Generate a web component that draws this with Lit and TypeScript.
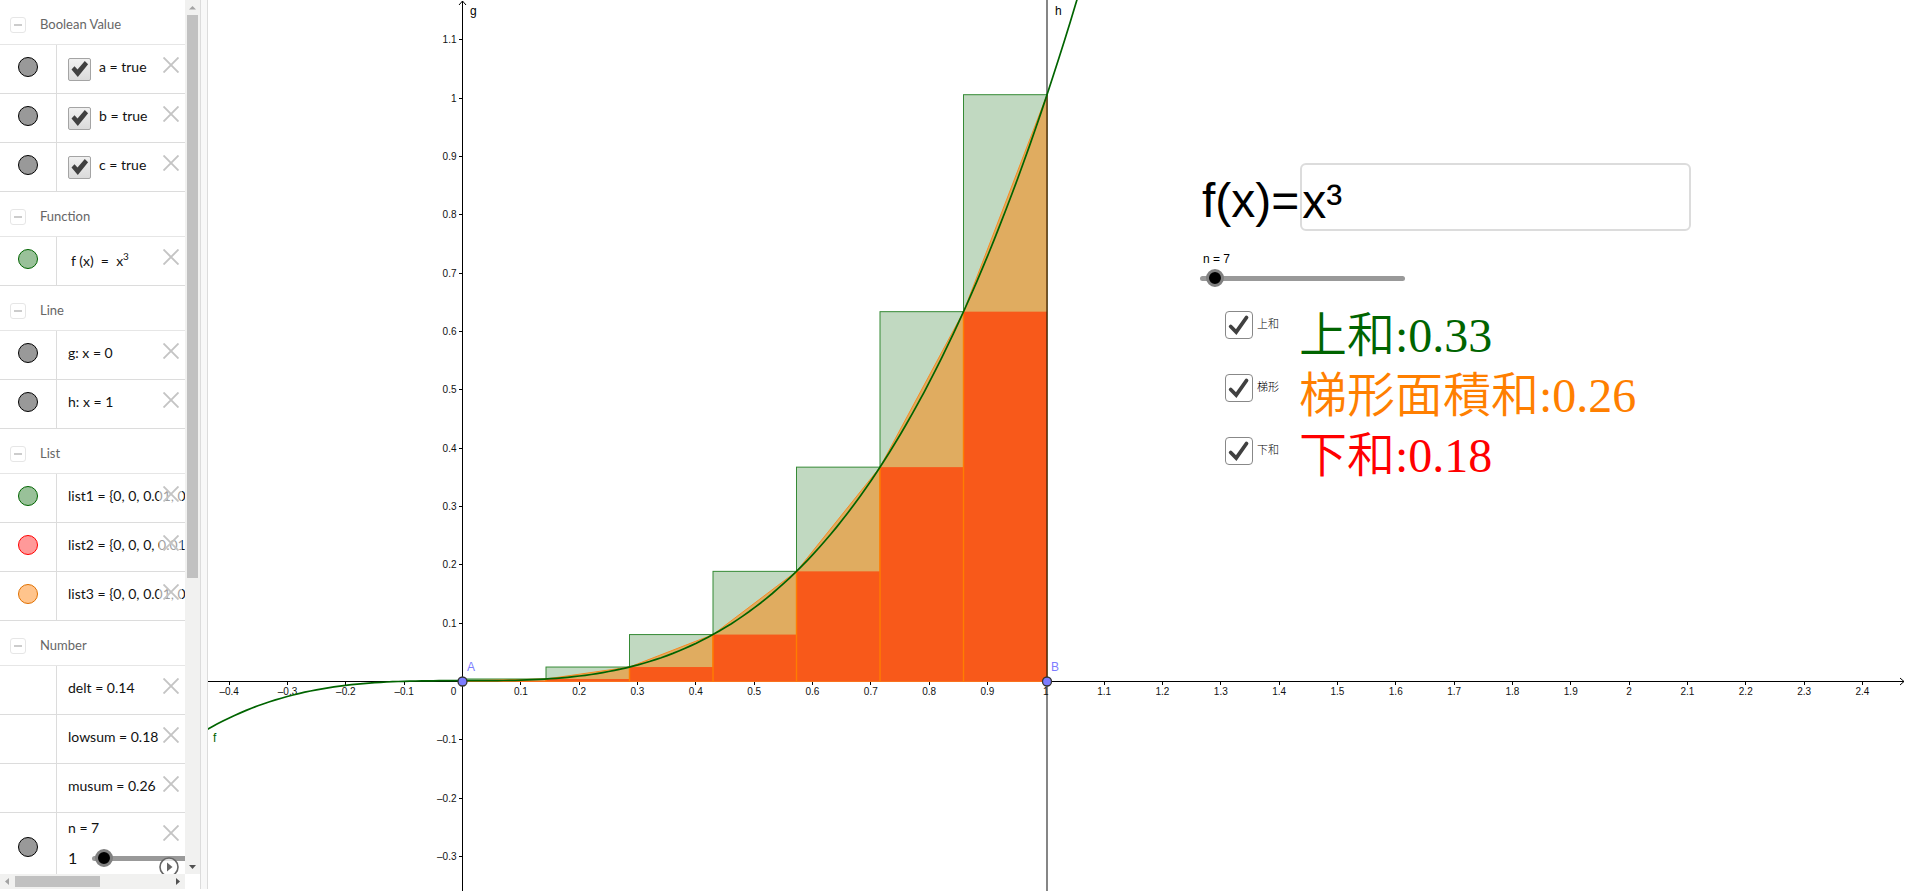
import { LitElement, html, svg, css, nothing } from "lit";
import { customElement } from "lit/decorators.js";

type Marble = "black" | "green" | "red" | "orange" | "none";
interface Item {
  kind: "bool" | "text" | "fn" | "slider";
  marble: Marble;
  text: string;
}
interface Group {
  title: string;
  items: Item[];
}

const GROUPS: Group[] = [
  {
    title: "Boolean Value",
    items: [
      { kind: "bool", marble: "black", text: "a = true" },
      { kind: "bool", marble: "black", text: "b = true" },
      { kind: "bool", marble: "black", text: "c = true" },
    ],
  },
  { title: "Function", items: [{ kind: "fn", marble: "green", text: "" }] },
  {
    title: "Line",
    items: [
      { kind: "text", marble: "black", text: "g: x = 0" },
      { kind: "text", marble: "black", text: "h: x = 1" },
    ],
  },
  {
    title: "List",
    items: [
      { kind: "text", marble: "green", text: "list1 = {0, 0, 0.01, 0.03, 0.05}" },
      { kind: "text", marble: "red", text: "list2 = {0, 0, 0, 0.01, 0.03}" },
      { kind: "text", marble: "orange", text: "list3 = {0, 0, 0.01, 0.02, 0.04}" },
    ],
  },
  {
    title: "Number",
    items: [
      { kind: "text", marble: "none", text: "delt = 0.14" },
      { kind: "text", marble: "none", text: "lowsum = 0.18" },
      { kind: "text", marble: "none", text: "musum = 0.26" },
      { kind: "slider", marble: "black", text: "n = 7" },
    ],
  },
];

const sliderStyles = css`
  .range {
    -webkit-appearance: none;
    appearance: none;
    display: block;
    height: 18px;
    margin: 0;
    background: transparent;
  }
  .range::-webkit-slider-runnable-track {
    height: 5px;
    background: #999;
    border-radius: 3px;
  }
  .range::-webkit-slider-thumb {
    -webkit-appearance: none;
    width: 18px;
    height: 18px;
    margin-top: -7px;
    border-radius: 50%;
    border: 3px solid #808080;
    background: #000;
  }
  .tick {
    display: grid;
  }
  .tick > * {
    grid-area: 1 / 1;
  }
  .tick > svg {
    pointer-events: none;
  }
`;

@customElement("algebra-view")
class AlgebraView extends LitElement {
  static styles = [
    sliderStyles,
    css`
      :host {
        display: grid;
        grid-template: minmax(0, 1fr) 15px / minmax(0, 1fr) 15px;
        font-family: Lato, "Noto Sans", sans-serif;
        background: #fff;
      }
      button {
        padding: 0;
        border: 0;
        background: none;
      }
      .list {
        overflow: hidden;
      }
      .head {
        display: flex;
        align-items: center;
        gap: 14px;
        height: 45px;
        box-sizing: border-box;
        padding: 3px 10px 0;
        border-bottom: 1px solid #e6e6e6;
        margin: 0;
        font-size: 13px;
        font-weight: 400;
        line-height: 16px;
        color: #666;
      }
      .fold {
        display: grid;
        place-items: center;
        width: 16px;
        height: 16px;
        margin-top: 3px;
        border: 1px solid #e6e6e6;
        border-radius: 3px;
      }
      .fold::before {
        content: "";
        width: 8px;
        height: 2px;
        background: #ccc;
      }
      .row {
        display: grid;
        grid-template-columns: 56px minmax(0, 1fr);
        height: 49px;
        box-sizing: border-box;
        border-bottom: 1px solid #dcdcdc;
      }
      .row.tall {
        height: 69px;
      }
      .side {
        display: grid;
        place-items: center;
        padding-bottom: 4px;
      }
      .tall .side {
        padding-bottom: 0;
      }
      .marble {
        width: 20px;
        height: 20px;
        border: 1px solid #000;
        border-radius: 50%;
        background: #999;
      }
      .marble.green {
        border-color: #006400;
        background: #99c199;
      }
      .marble.red {
        border-color: #f00;
        background: #ff9999;
      }
      .marble.orange {
        border-color: #e07000;
        background: #ffc48c;
      }
      .body {
        display: grid;
        grid-template-columns: minmax(0, 1fr) 23px;
        border-left: 1px solid #dcdcdc;
        padding-right: 3px;
        overflow: hidden;
      }
      .content {
        display: flex;
        gap: 8px;
        padding-left: 11px;
        padding-top: 12px;
        font-size: 14px;
        line-height: 20px;
        color: #111;
        white-space: nowrap;
      }
      .fn {
        padding-left: 14px;
        padding-top: 14px;
      }
      .content sup {
        font-size: 10px;
        line-height: 1px;
      }
      .check {
        appearance: none;
        box-sizing: border-box;
        width: 23px;
        height: 23px;
        margin: 1px 0 0;
        border: 1px solid #a4a4a4;
        border-radius: 2px;
        background: linear-gradient(#f0f0f0, #dadada);
      }
      .tick > svg {
        margin-top: 1px;
      }
      .close {
        width: 23px;
        height: 23px;
        margin-top: 8px;
        display: grid;
        place-items: center;
        background: rgba(255, 255, 255, 0.6);
        z-index: 1;
      }
      .slider {
        flex-direction: column;
        gap: 10px;
        padding-top: 5px;
      }
      .slider-line {
        display: flex;
        align-items: center;
        gap: 15px;
        font-size: 16px;
      }
      .slider-line .range {
        width: 120px;
        flex: none;
      }
      .tools {
        display: flex;
        flex-direction: column;
        gap: 13px;
      }
      .play {
        display: block;
        width: 20px;
        height: 20px;
        z-index: 1;
      }
      .bar {
        display: flex;
        justify-content: space-between;
        align-items: center;
        background: #f1f1f0;
      }
      .bar.v {
        flex-direction: column;
      }
      .bar svg {
        display: block;
        flex: none;
      }
      .rest {
        flex: 1;
        display: flex;
      }
      .v .rest {
        flex-direction: column;
      }
      .thumb {
        background: #c1c1c1;
      }
      .v .thumb {
        width: 11px;
        height: calc(200% / 3);
      }
      .h .thumb {
        height: 11px;
        width: 55%;
      }
    `,
  ];

  private item(it: Item) {
    const close = html`<button class="close" aria-label="Delete">
      <svg width="16" height="16" viewBox="0 0 16 16">
        <path d="M.5.5l15 15M15.500.5L.5 15.500" stroke="#c4c4c4" stroke-width="1.900" fill="none" />
      </svg>
    </button>`;
    let content;
    if (it.kind === "bool") {
      content = html`<label class="content">
        <span class="tick">
          <input class="check" type="checkbox" checked />
          <svg width="23" height="23" viewBox="0 0 23 23">
            <path d="M3.5 11.5l3-3.2 3 3.3L16.8 3l3.3 3.2L9.8 19z" fill="#404040" />
          </svg>
        </span>
        <span>${it.text}</span>
      </label>`;
    } else if (it.kind === "fn") {
      content = html`<div class="content fn"><span>f (x) &nbsp;=&nbsp; x<sup>3</sup></span></div>`;
    } else if (it.kind === "slider") {
      content = html`<div class="content slider">
        <span>${it.text}</span>
        <label class="slider-line">1<input class="range" type="range" min="1" max="200" value="7" aria-label="n" /></label>
      </div>`;
    } else {
      content = html`<div class="content"><span>${it.text}</span></div>`;
    }
    return html`<div class="row ${it.kind === "slider" ? "tall" : ""}">
      <div class="side">
        ${it.marble === "none" ? nothing : html`<button class="marble ${it.marble}" aria-label="Show or hide"></button>`}
      </div>
      <div class="body">
        ${content}
        <div class="tools">
          ${close}
          ${it.kind === "slider"
            ? html`<button class="play" aria-label="Play">
                <svg width="20" height="20" viewBox="0 0 20 20">
                  <circle cx="10" cy="10" r="9" fill="#fff" fill-opacity=".7" stroke="#666" stroke-width="1.6" />
                  <path d="M8 5.5l5.5 4.5L8 14.5z" fill="#666" />
                </svg>
              </button>`
            : nothing}
        </div>
      </div>
    </div>`;
  }

  render() {
    return html`
      <div class="list">
        ${GROUPS.map(
          (g) => html`<h2 class="head"><button class="fold" aria-label="Collapse"></button>${g.title}</h2>
            ${g.items.map((it) => this.item(it))}`
        )}
      </div>
      <div class="bar v">
        <svg width="15" height="15"><path d="M4 9.5h7L7.500 6z" fill="#a3a3a3" /></svg>
        <div class="rest"><div class="thumb"></div></div>
        <svg width="15" height="15"><path d="M4 6h7l-3.500 4z" fill="#505050" /></svg>
      </div>
      <div class="bar h">
        <svg width="15" height="15"><path d="M9 4v7L5 7.500z" fill="#a3a3a3" /></svg>
        <div class="rest"><div class="thumb"></div></div>
        <svg width="15" height="15"><path d="M6 4v7l4-3.500z" fill="#505050" /></svg>
      </div>
    `;
  }
}

/* Plot geometry: origin, axis unit, and the span between A and B. */
const OX = 254.5;
const OY = 681.5;
const UNIT = 583.3;
const SPAN = 584.5;
const HEIGHT = 586;
const BASE = 680.7;
const N = 7;
const f = (x: number) => x ** 3;
const px = (x: number) => OX + x * SPAN;
const py = (y: number) => BASE - y * HEIGHT;
const label = (k: number) => (k < 0 ? "–" : "") + String(Math.abs(k) / 10);

@customElement("graphics-view")
class GraphicsView extends LitElement {
  static styles = [
    sliderStyles,
    css`
      :host {
        display: block;
        position: relative;
        overflow: hidden;
        font-family: "Liberation Sans", Arial, sans-serif;
        color: #000;
      }
      .plot {
        display: block;
        width: 100%;
        height: 100vh;
      }
      .axis {
        stroke: #000;
        stroke-width: 1;
        shape-rendering: crispEdges;
      }
      .head {
        stroke: #000;
        fill: none;
      }
      .num {
        font-size: 10px;
        fill: #111;
      }
      .mid {
        text-anchor: middle;
      }
      .end {
        text-anchor: end;
      }
      .name {
        font-size: 12px;
      }
      .point {
        fill: #7d7dff;
      }
      .dot {
        fill: #7d7dff;
        stroke: #333;
        stroke-width: 1.3;
      }
      .curve {
        fill: none;
        stroke: #006400;
        stroke-width: 1.7;
      }
      .upper {
        fill: #c1d9c1;
        stroke: #358a35;
      }
      .trap {
        fill: #e0ac60;
        stroke: #fa8a20;
      }
      .lower {
        fill: #f8591a;
      }
      .seam {
        stroke: #ff7d00;
        stroke-width: 1.4;
      }
      .bound {
        stroke: #000;
        stroke-opacity: 0.6;
        stroke-width: 1.6;
      }
      .panel {
        position: absolute;
        left: 992px;
        top: 163px;
        display: flex;
        flex-direction: column;
      }
      .formula {
        display: flex;
        font-size: 48px;
        line-height: 60px;
      }
      .formula label {
        padding: 8px 0 0 2px;
      }
      .formula input {
        box-sizing: border-box;
        width: 391px;
        height: 68px;
        margin-left: 1px;
        padding: 8px 0 0;
        border: 2px solid #dcdcdc;
        border-radius: 6px;
        font: inherit;
        color: #000;
        background: #fff;
      }
      .steps {
        display: flex;
        flex-direction: column;
        gap: 2px;
        margin-top: 20px;
        font-size: 12px;
        line-height: 16px;
      }
      .steps label {
        padding-left: 3px;
      }
      .steps .range {
        width: 205px;
      }
      .sums {
        display: flex;
        gap: 20px;
        margin-top: 19px;
        padding-left: 25px;
      }
      .toggles {
        display: flex;
        flex-direction: column;
        gap: 35px;
        padding-top: 5px;
      }
      .toggle {
        display: flex;
        gap: 4px;
        font-size: 11px;
        line-height: 26px;
        font-family: "AR PL UKai TW", "Liberation Serif", "Noto Sans CJK TC", serif;
        font-weight: 300;
      }
      .box {
        appearance: none;
        box-sizing: border-box;
        width: 28px;
        height: 28px;
        margin: 0;
        border: 1px solid #888;
        border-radius: 4px;
        background: #fff;
      }
      .results {
        font-family: "Liberation Serif", "AR PL UKai TW", "Noto Sans CJK TC", serif;
        font-size: 48px;
        font-weight: 350;
        line-height: 60px;
        white-space: nowrap;
      }
      .up {
        color: #006400;
      }
      .mean {
        color: #ff7f00;
      }
      .low {
        color: #f00;
      }
    `,
  ];

  private plot() {
    const xs = Array.from({ length: N }, (_, i) => i / N);
    const step = 1 / N;
    const pts: string[] = [];
    for (let x = -0.45; x <= 1.08; x += 0.01) pts.push(`${px(x).toFixed(1)},${py(f(x)).toFixed(1)}`);
    const xt = Array.from({ length: 29 }, (_, i) => i - 4).filter((k) => k !== 0);
    const yt = Array.from({ length: 15 }, (_, i) => i - 3).filter((k) => k !== 0 && k < 12);
    return svg`
      ${xs.map((x) => svg`<rect class="upper" x=${px(x)} y=${py(f(x + step))} width=${SPAN / N} height=${OY - py(f(x + step))} />`)}
      ${xs.map(
        (x) => svg`<polygon class="trap" points="${px(x)},${OY} ${px(x)},${py(f(x))} ${px(x + step)},${py(f(x + step))} ${px(x + step)},${OY}" />`
      )}
      ${xs.map((x) => svg`<rect class="lower" x=${px(x)} y=${py(f(x))} width=${SPAN / N} height=${OY - py(f(x))} />`)}
      ${xs.slice(1).map((x) => svg`<line class="seam" x1=${px(x)} x2=${px(x)} y1=${py(f(x))} y2=${OY} />`)}
      <line class="bound" x1=${px(1)} x2=${px(1)} y1="0" y2="100%" />
      <line class="axis" x1="0" x2=${OX} y1=${OY} y2=${OY} />
      <line class="axis" x1=${px(1)} x2="99.9%" y1=${OY} y2=${OY} />
      <svg x="100%" y=${OY} overflow="visible"><path class="head" d="M-6-3.500l4 3.500-4 3.500" /></svg>
      <line class="axis" x1=${OX} x2=${OX} y1="1" y2="100%" />
      <path class="head" d="M${OX - 3.5} 5l3.500-4 3.500 4" />
      ${xt.map(
        (k) => svg`<line class="axis" x1=${OX + (k * UNIT) / 10} x2=${OX + (k * UNIT) / 10} y1=${OY} y2=${OY + 3} />
          <text class="num mid" x=${OX + (k * UNIT) / 10} y="695">${label(k)}</text>`
      )}
      <text class="num mid" x=${OX - 9} y="695">0</text>
      ${yt.map(
        (k) => svg`<line class="axis" x1=${OX - 4} x2=${OX} y1=${OY - (k * UNIT) / 10} y2=${OY - (k * UNIT) / 10} />
          <text class="num end" x=${OX - 6} y=${OY + 3.5 - (k * UNIT) / 10}>${label(k)}</text>`
      )}
      <polyline class="curve" points=${pts.join(" ")} />
      <circle class="dot" cx=${OX} cy=${OY} r="4.500" />
      <circle class="dot" cx=${px(1)} cy=${OY} r="4.500" />
      <text class="name point" x="259" y="671">A</text>
      <text class="name point" x="843" y="671">B</text>
      <text class="name" x="262" y="15">g</text>
      <text class="name" x="847" y="15">h</text>
      <text class="name" x="5" y="742" fill="#006400">f</text>
    `;
  }

  private toggle(text: string) {
    return html`<label class="toggle">
      <span class="tick">
        <input class="box" type="checkbox" checked />
        <svg width="28" height="28" viewBox="0 0 28 28">
          <path d="M5.700 15.500l5.500 5.500L21.500 6.500" fill="none" stroke="#404040" stroke-width="3.800" stroke-linecap="round" />
        </svg>
      </span>
      ${text}
    </label>`;
  }

  render() {
    return html`
      <svg class="plot">${this.plot()}</svg>
      <div class="panel">
        <div class="formula">
          <label for="fx">f(x)=</label>
          <input id="fx" type="text" value="x³" />
        </div>
        <div class="steps">
          <label for="n">n = 7</label>
          <input id="n" class="range" type="range" min="1" max="200" value="7" />
        </div>
        <div class="sums">
          <div class="toggles">${["上和", "梯形", "下和"].map((t) => this.toggle(t))}</div>
          <div class="results">
            <div class="up">上和:0.33</div>
            <div class="mean">梯形面積和:0.26</div>
            <div class="low">下和:0.18</div>
          </div>
        </div>
      </div>
    `;
  }
}

@customElement("app-root")
class AppRoot extends LitElement {
  static styles = css`
    :host {
      display: grid;
      grid-template-columns: 200px 8px minmax(0, 1fr);
      height: 100vh;
      overflow: hidden;
      background: #fff;
    }
    .left {
      min-height: 0;
      margin-bottom: 2px;
    }
    .split {
      box-sizing: border-box;
      margin-bottom: 2px;
      border: solid #dcdcdc;
      border-width: 0 1px;
      background: #f8f8f8;
    }
  `;

  render() {
    return html`
      <algebra-view class="left"></algebra-view>
      <div class="split"></div>
      <graphics-view></graphics-view>
    `;
  }
}
